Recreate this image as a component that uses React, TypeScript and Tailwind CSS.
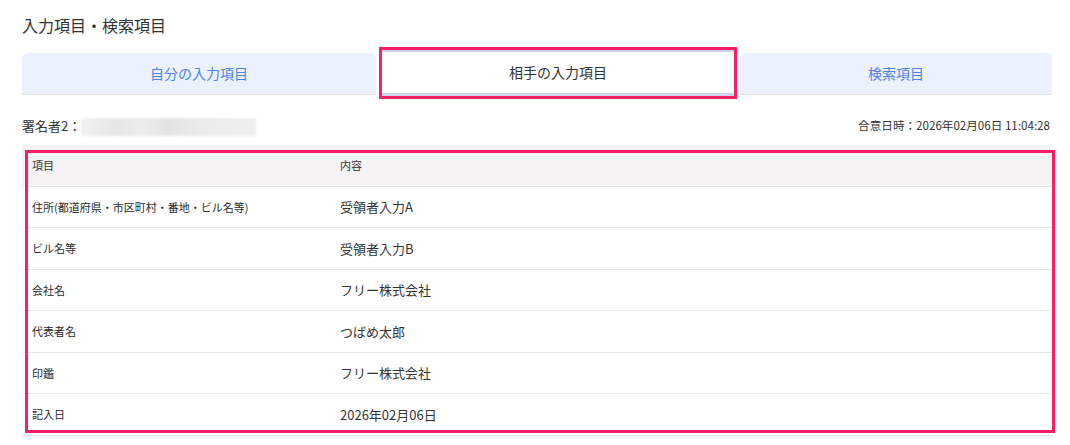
const rows: { label: string; value: string }[] = [
  { label: '住所(都道府県・市区町村・番地・ビル名等)', value: '受領者入力A' },
  { label: 'ビル名等', value: '受領者入力B' },
  { label: '会社名', value: 'フリー株式会社' },
  { label: '代表者名', value: 'つばめ太郎' },
  { label: '印鑑', value: 'フリー株式会社' },
  { label: '記入日', value: '2026年02月06日' },
];

function App() {
  return (
    <div className="w-[1070px] h-[445px] overflow-hidden bg-white pl-[22px] pr-[18px] pt-[14px] text-[#333] font-['Noto_Sans_CJK_JP','Noto_Sans',sans-serif]">
      <h1 className="text-[16px] leading-[22px]">入力項目・検索項目</h1>

      {/* tabs */}
      <div className="mt-[17px] flex items-start gap-[3px]">
        <button className="w-[354px] h-[42px] rounded-t-[6px] bg-[#ebf2fd] border-b border-[#dfe3ea] text-[14px] text-[#4d82ea]">
          自分の入力項目
        </button>
        <div className="w-[358px] h-[52px] -mt-[6px] -mb-[4px] border-[3px] border-[#fa1f64]">
          <button className="w-full h-full bg-white border-t-2 border-b-[3px] border-[#cdd4ec] text-[14px] text-[#333]">
            相手の入力項目
          </button>
        </div>
        <button className="flex-1 h-[42px] rounded-t-[6px] bg-[#ebf2fd] border-b border-[#dfe3ea] text-[14px] text-[#4d82ea]">
          検索項目
        </button>
      </div>

      {/* signer row */}
      <div className="mt-[20px] h-[22px] flex items-center justify-between">
        <div className="flex items-center text-[13px]">
          <span>署名者2：</span>
          <div className="w-[175px] h-[18px] mt-[2px] blur-[1px] bg-[linear-gradient(90deg,#f2f2f2_0%,#e6e6e6_20%,#ededed_35%,#e3e3e3_50%,#ececec_70%,#efefef_100%)]" />
        </div>
        <span className="text-[11.6px] mr-[2px]">合意日時：2026年02月06日 11:04:28</span>
      </div>

      {/* table */}
      <div className="relative mt-[8px]">
        <div className="flex h-[41.5px] items-center bg-[#f5f3f4] border-b border-[#e4e4e6] text-[11px]">
          <div className="w-[318px] pl-[10px]">項目</div>
          <div>内容</div>
        </div>
        {rows.map((r, i) => (
          <div key={i} className="flex h-[41.5px] items-center border-b border-[#e6e8ec]">
            <div className="w-[318px] pl-[10px] text-[11px] text-[#2a2a2a]">{r.label}</div>
            <div className="text-[13px]">{r.value}</div>
          </div>
        ))}
        {/* annotation frame */}
        <div className="absolute left-[3px] top-[5px] w-full h-[283px] border-[3px] border-[#fa1f64] pointer-events-none" />
      </div>
    </div>
  );
}

export default App;
